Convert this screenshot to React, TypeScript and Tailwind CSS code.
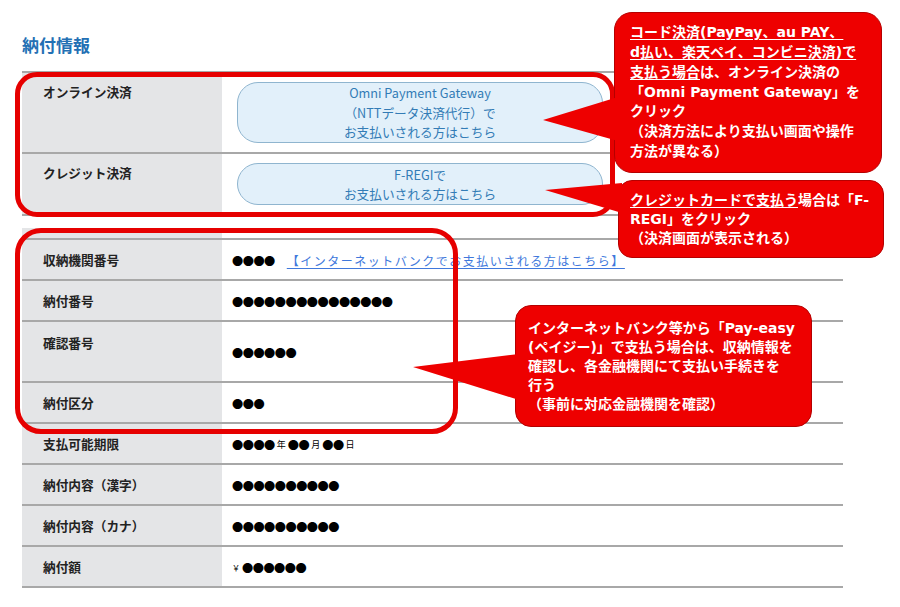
import React from "react";

const Dots = ({ n }: { n: number }) => (
  <span className="text-[11.2px] tracking-[-0.5px] leading-none text-black font-['Noto_Sans_CJK_JP',sans-serif]">
    {"●".repeat(n)}
  </span>
);

function Row({
  label,
  children,
  tall,
}: {
  label: string;
  children: React.ReactNode;
  tall?: boolean;
}) {
  return (
    <div className={`flex border-b-2 border-[#a8a8a8] ${tall ? "h-[61px]" : "h-[41px]"}`}>
      <div
        className={`w-[200px] bg-[#e4e5e7] pl-[21px] text-[12.7px] font-bold leading-[18px] text-[#222] flex ${
          tall ? "items-start pt-[12px]" : "items-center"
        }`}
      >
        {label}
      </div>
      <div className="flex-1 flex items-center pl-[10px] pt-[3px]">{children}</div>
    </div>
  );
}

export default function App() {
  return (
    <div className="relative w-[900px] h-[607px] overflow-hidden bg-white font-['Noto_Sans_CJK_JP',sans-serif] text-[#222]">
      <div className="pl-[22px] pr-[57px] pt-[34px]">
        <h1 className="text-[17px] leading-[22px] font-bold text-[#2370b4]">納付情報</h1>

        {/* Table 1 */}
        <div className="mt-[15px] border-t-2 border-[#a8a8a8]">
          <div className="flex border-b-2 border-[#a8a8a8]">
            <div className="w-[200px] bg-[#e4e5e7] pl-[21px] pt-[10px] text-[12.7px] font-bold leading-[18px]">
              オンライン決済
            </div>
            <div className="flex-1 pl-[15px] py-[9px]">
              <div className="w-[366px] h-[61px] rounded-[21px] border border-[#8fb5cf] bg-[#e2f0fa] text-[#337cb6] text-[12.7px] leading-[19.5px] flex flex-col items-center justify-center">
                <span>Omni Payment Gateway</span>
                <span>（NTTデータ決済代行）で</span>
                <span>お支払いされる方はこちら</span>
              </div>
            </div>
          </div>
          <div className="flex border-b-2 border-[#a8a8a8]">
            <div className="w-[200px] bg-[#e4e5e7] pl-[21px] pt-[10px] text-[12.7px] font-bold leading-[18px]">
              クレジット決済
            </div>
            <div className="flex-1 pl-[15px] py-[9px]">
              <div className="w-[366px] h-[42px] rounded-[21px] border border-[#8fb5cf] bg-[#e2f0fa] text-[#337cb6] text-[12.7px] leading-[19.5px] flex flex-col items-center justify-center">
                <span>F-REGIで</span>
                <span>お支払いされる方はこちら</span>
              </div>
            </div>
          </div>
        </div>

        {/* Table 2 */}
        <div className="mt-[12px]">
          <div className="flex h-[10px]">
            <div className="w-[200px] bg-[#e4e5e7]" />
          </div>
          <div className="border-t-2 border-[#a8a8a8]">
            <Row label="収納機関番号">
              <Dots n={4} />
              <span className="ml-[12px] text-[12px] tracking-[1.5px] text-[#4078dc] underline underline-offset-2 leading-none">
                【インターネットバンクでお支払いされる方はこちら】
              </span>
            </Row>
            <Row label="納付番号">
              <Dots n={15} />
            </Row>
            <Row label="確認番号" tall>
              <Dots n={6} />
            </Row>
            <Row label="納付区分">
              <Dots n={3} />
            </Row>
            <Row label="支払可能期限">
              <span className="flex items-center text-black">
                <Dots n={4} />
                <span className="text-[9px] mx-[2px] leading-none">年</span>
                <Dots n={2} />
                <span className="text-[9px] mx-[2px] leading-none">月</span>
                <Dots n={2} />
                <span className="text-[9px] mx-[2px] leading-none">日</span>
              </span>
            </Row>
            <Row label="納付内容（漢字）">
              <Dots n={10} />
            </Row>
            <Row label="納付内容（カナ）">
              <Dots n={10} />
            </Row>
            <Row label="納付額">
              <span className="flex items-center">
                <span className="text-[8px] mr-[2px] text-black">￥</span>
                <Dots n={6} />
              </span>
            </Row>
          </div>
        </div>
      </div>

      {/* Highlight boxes */}
      <div className="absolute left-[15px] top-[72px] w-[600px] h-[145px] border-[5px] border-[#e60000] rounded-[22px]" />
      <div className="absolute left-[15px] top-[228px] w-[443px] h-[206px] border-[5px] border-[#e60000] rounded-[26px]" />

      {/* Callouts */}
      <div className="absolute left-[614px] top-[12px] w-[268px] h-[161px] rounded-[18px] bg-[#ee0000] border border-[#b50000] flex flex-col justify-center pl-[15px] text-white text-[14px] leading-[19.8px] font-semibold whitespace-nowrap font-['DejaVu_Sans','Noto_Sans_CJK_JP',sans-serif]">
        <span><span className="underline underline-offset-2">コード決済(PayPay、au PAY、</span></span>
        <span><span className="underline underline-offset-2">d払い、楽天ペイ、コンビニ決済)で</span></span>
        <span><span className="underline underline-offset-2">支払う場合</span>は、オンライン決済の</span>
        <span>「Omni Payment Gateway」を</span>
        <span>クリック</span>
        <span>（決済方法により支払い画面や操作</span>
        <span>方法が異なる）</span>
      </div>
      <div className="absolute left-[618px] top-[180px] w-[266px] h-[78px] rounded-[14px] bg-[#ee0000] border border-[#b50000] flex flex-col justify-center pl-[11px] text-white text-[14px] leading-[19px] font-semibold whitespace-nowrap font-['DejaVu_Sans','Noto_Sans_CJK_JP',sans-serif]">
        <span><span className="underline underline-offset-2">クレジットカードで支払う</span>場合は「F-</span>
        <span>REGI」をクリック</span>
        <span>（決済画面が表示される）</span>
      </div>
      <div className="absolute left-[515px] top-[305px] w-[297px] h-[122px] rounded-[16px] bg-[#ee0000] border border-[#b50000] flex flex-col justify-center pl-[12px] text-white text-[14px] leading-[19px] font-semibold whitespace-nowrap font-['DejaVu_Sans','Noto_Sans_CJK_JP',sans-serif]">
        <span>インターネットバンク等から「Pay-easy</span>
        <span>(ペイジー)」で支払う場合は、収納情報を</span>
        <span>確認し、各金融機関にて支払い手続きを</span>
        <span>行う</span>
        <span>（事前に対応金融機関を確認）</span>
      </div>

      {/* Pointers */}
      <svg className="absolute left-0 top-0" width="900" height="607" viewBox="0 0 900 607">
        <polygon points="543,120 618,97 618,141" fill="#ee0000" />
        <polygon points="545,190 622,183 622,213" fill="#ee0000" />
        <polygon points="413,367 519,354 519,400" fill="#ee0000" />
      </svg>
    </div>
  );
}
